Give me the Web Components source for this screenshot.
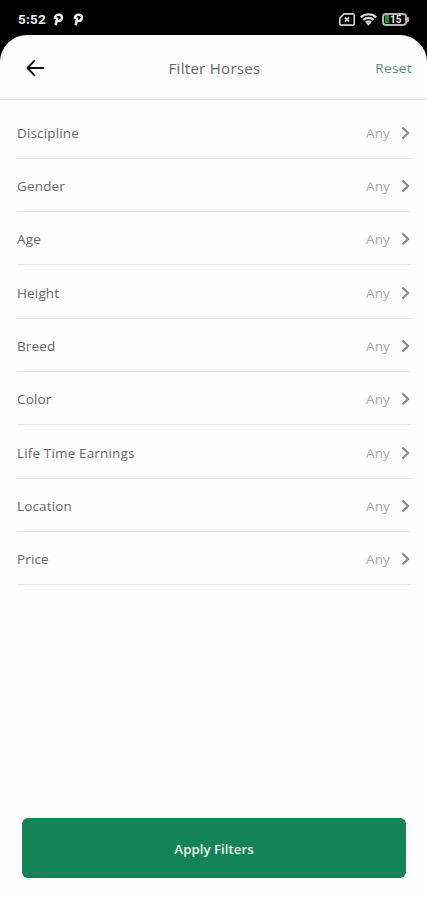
<!DOCTYPE html>
<html lang="en">
<head>
<meta charset="utf-8">
<meta name="viewport" content="width=device-width, initial-scale=1">
<title>Filter Horses</title>
<style>
    html, body {
        margin: 0;
        height: 100%;
        background: #000;
    }
    body {
        font-family: "Open Sans", "Noto Sans", sans-serif;
        overflow: hidden;
    }
</style>
</head>
<body>
<filter-screen>
    <status-bar slot="status" time="5:52" battery="15"></status-bar>
    <screen-header slot="header">
        Filter Horses
        <span slot="action">Reset</span>
    </screen-header>
    <filter-row value="Any">Discipline</filter-row>
    <filter-row value="Any">Gender</filter-row>
    <filter-row value="Any">Age</filter-row>
    <filter-row value="Any">Height</filter-row>
    <filter-row value="Any">Breed</filter-row>
    <filter-row value="Any">Color</filter-row>
    <filter-row value="Any">Life Time Earnings</filter-row>
    <filter-row value="Any">Location</filter-row>
    <filter-row value="Any">Price</filter-row>
    <apply-button slot="footer">Apply Filters</apply-button>
</filter-screen>

<script>
class FilterScreen extends HTMLElement {
    constructor() {
        super();
        this.attachShadow({ mode: 'open' });
        this.shadowRoot.innerHTML = `
            <style>
                :host {
                    display: flex;
                    flex-direction: column;
                    height: 100vh;
                }
                .sheet {
                    flex: 1;
                    display: flex;
                    flex-direction: column;
                    background: #fefefe;
                    border-radius: 27px 27px 0 0;
                }
                .list {
                    flex: 1;
                    padding: 5.4px 16px 0 17px;
                }
                .footer {
                    padding: 0 21px 22px 22px;
                }
            </style>
            <slot name="status"></slot>
            <div class="sheet">
                <slot name="header"></slot>
                <div class="list"><slot></slot></div>
                <div class="footer"><slot name="footer"></slot></div>
            </div>
        `;
    }
}

class StatusBar extends HTMLElement {
    constructor() {
        super();
        this.attachShadow({ mode: 'open' });
        this.shadowRoot.innerHTML = `
            <style>
                :host {
                    display: flex;
                    align-items: center;
                    box-sizing: border-box;
                    height: 35px;
                    padding: 3px 18px 0 18px;
                    background: #000;
                    color: #eee;
                    font-family: Roboto, sans-serif;
                }
                .time {
                    width: 28px;
                    margin-right: 7px;
                    font-size: 13.5px;
                    font-weight: 700;
                    letter-spacing: 0.2px;
                    white-space: nowrap;
                }
                svg { display: block; flex: none; }
                .app { margin-right: 9px; }
                .icons {
                    display: flex;
                    align-items: center;
                    gap: 5px;
                    margin-left: auto;
                }
                .battery {
                    display: flex;
                    align-items: center;
                }
                .cell {
                    display: flex;
                    align-items: center;
                    box-sizing: border-box;
                    width: 25px;
                    height: 13px;
                    padding-left: 1px;
                    border: 2px solid #b4b4b4;
                    border-radius: 4px;
                    font-size: 10px;
                    font-weight: 700;
                    line-height: 9px;
                }
                .charge {
                    width: 4px;
                    height: 8px;
                    margin-right: 1px;
                    background: #189a12;
                }
                .level { padding-top: 1px; }
                .tip {
                    width: 2px;
                    height: 5px;
                    background: #b4b4b4;
                    border-radius: 0 1px 1px 0;
                }
            </style>
            <span class="time"></span>
            <svg class="app" width="11" height="13" viewBox="0 0 11 13"><path d="M2.700 12.300 4.200 4.500M2 6C1.500 3.200 3.300 1.800 5.600 1.800 8 1.800 9.200 3 8.900 5 8.600 7 7 8.200 4.700 8" fill="none" stroke="#eee" stroke-width="2.400"/></svg>
            <svg class="app" width="11" height="13" viewBox="0 0 11 13"><path d="M2.700 12.300 4.200 4.500M2 6C1.500 3.200 3.300 1.800 5.600 1.800 8 1.800 9.200 3 8.900 5 8.600 7 7 8.200 4.700 8" fill="none" stroke="#eee" stroke-width="2.400"/></svg>
            <div class="icons">
                <svg width="16" height="13" viewBox="0 0 16 13" fill="none" stroke="#d4d4d4">
                    <path d="M5 .9h8.500a1.700 1.700 0 0 1 1.700 1.700v7.800a1.700 1.700 0 0 1-1.700 1.700h-11A1.700 1.700 0 0 1 .8 10.400V5.200Z" stroke-width="1.600" stroke-linejoin="round"/>
                    <path d="m5.800 4.300 4.400 4.400m0-4.400-4.400 4.400" stroke-width="1.800"/>
                </svg>
                <svg width="17" height="13" viewBox="0 0 17 13" fill="none" stroke="#dcdcdc" stroke-width="2.200">
                    <path d="M.8 4.400a11 11 0 0 1 15.400 0M3.300 7a7.400 7.400 0 0 1 10.400 0M5.800 9.600a4 4 0 0 1 5.400 0"/>
                    <path d="m6.300 10 2.200 2.800 2.200-2.800Z" fill="#dcdcdc" stroke="none"/>
                </svg>
                <div class="battery">
                    <div class="cell"><i class="charge"></i><span class="level"></span></div>
                    <i class="tip"></i>
                </div>
            </div>
        `;
    }

    connectedCallback() {
        this.shadowRoot.querySelector('.time').textContent = this.getAttribute('time') || '';
        this.shadowRoot.querySelector('.level').textContent = this.getAttribute('battery') || '';
    }
}

class ScreenHeader extends HTMLElement {
    constructor() {
        super();
        this.attachShadow({ mode: 'open' });
        this.shadowRoot.innerHTML = `
            <style>
                :host {
                    display: grid;
                    grid-template-columns: 1fr auto 1fr;
                    align-items: center;
                    box-sizing: border-box;
                    height: 65px;
                    padding: 1px 15px 0 17px;
                    border-bottom: 1px solid #e6e6e6;
                }
                svg { display: block; margin-left: 9px; }
                .title {
                    font-size: 15px;
                    letter-spacing: 0.3px;
                    color: #666;
                    white-space: nowrap;
                }
                .action {
                    justify-self: end;
                    font-size: 13.5px;
                    letter-spacing: 0.4px;
                    color: #5c8c7a;
                }
            </style>
            <svg width="19" height="18" viewBox="0 0 19 18"><path d="M17.300 9H2M8.500 1.700 1.500 9l7 7.300" fill="none" stroke="#111" stroke-width="1.900" stroke-linecap="round" stroke-linejoin="round"/></svg>
            <div class="title"><slot></slot></div>
            <div class="action"><slot name="action"></slot></div>
        `;
    }
}

class FilterRow extends HTMLElement {
    constructor() {
        super();
        this.attachShadow({ mode: 'open' });
        this.shadowRoot.innerHTML = `
            <style>
                :host {
                    display: flex;
                    align-items: center;
                    box-sizing: border-box;
                    height: 53.35px;
                    padding-top: 2px;
                    border-bottom: 1px solid #e6e6e6;
                    font-size: 13.5px;
                    letter-spacing: 0.15px;
                    color: #666;
                    cursor: pointer;
                }
                .value {
                    margin-left: auto;
                    margin-right: 11px;
                    color: #a6a6a6;
                }
                svg { display: block; margin-right: 1px; }
            </style>
            <slot></slot>
            <span class="value"></span>
            <svg width="9" height="14" viewBox="0 0 9 14"><path d="m1.300 1.500 5.900 5.500-5.900 5.500" fill="none" stroke="#8a8a8a" stroke-width="2.200"/></svg>
        `;
    }

    connectedCallback() {
        this.shadowRoot.querySelector('.value').textContent = this.getAttribute('value') || 'Any';
    }
}

class ApplyButton extends HTMLElement {
    constructor() {
        super();
        this.attachShadow({ mode: 'open' });
        this.shadowRoot.innerHTML = `
            <style>
                :host { display: block; }
                button {
                    display: block;
                    width: 100%;
                    height: 60px;
                    padding: 1px 0 0;
                    border: 0;
                    border-radius: 6px;
                    background: #15835a;
                    color: #e8f4ee;
                    font: 600 13.3px "Open Sans", "Noto Sans", sans-serif;
                }
            </style>
            <button type="button"><slot></slot></button>
        `;
    }
}

customElements.define('filter-screen', FilterScreen);
customElements.define('status-bar', StatusBar);
customElements.define('screen-header', ScreenHeader);
customElements.define('filter-row', FilterRow);
customElements.define('apply-button', ApplyButton);
</script>
</body>
</html>
